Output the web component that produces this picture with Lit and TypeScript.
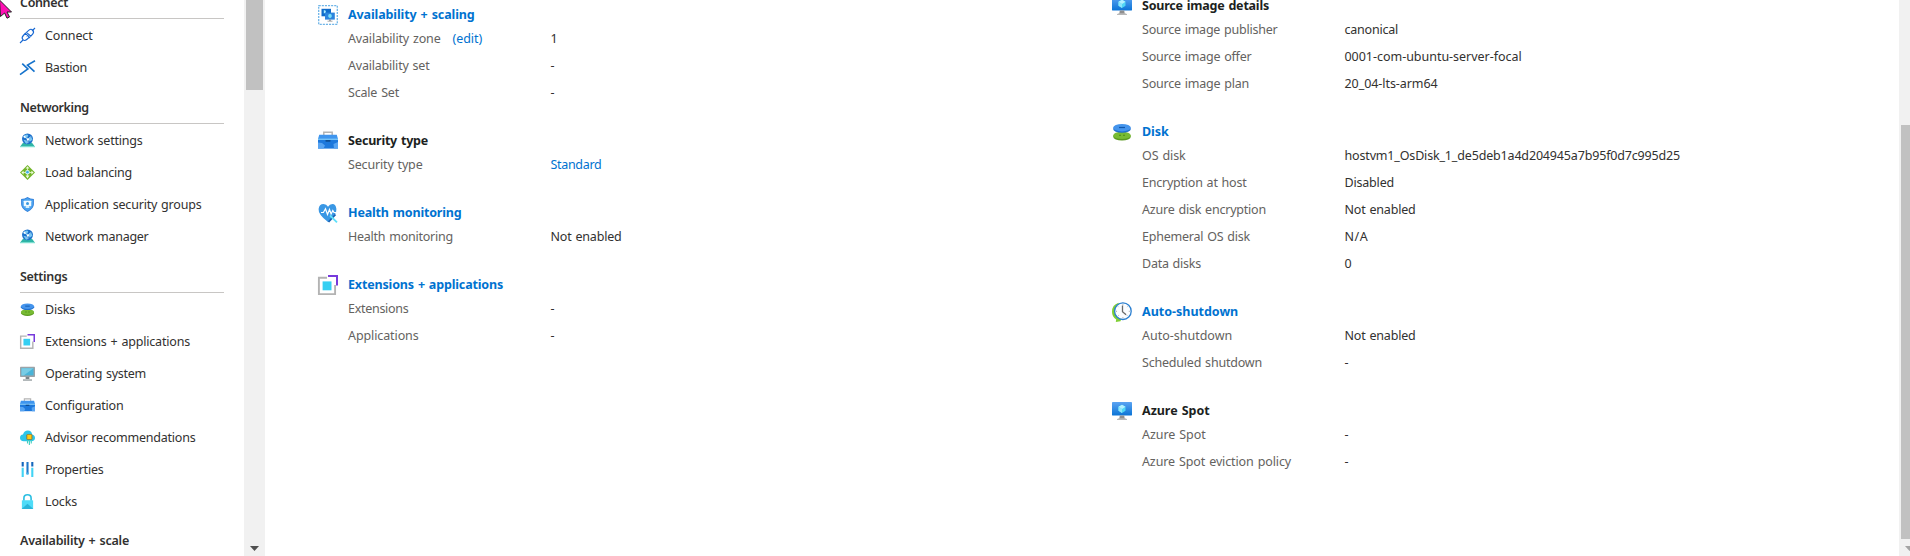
import { LitElement, html, css, svg } from "lit";
import { customElement, property } from "lit/decorators.js";

const FAMILY = '"Noto Sans", "Open Sans", sans-serif';
const WORD_GAP = 0.9;
const ctx = document.createElement("canvas").getContext("2d")!;

/* Tracking that brings a label to its designed width. */
function tracking(text: string, width: number, weight: number): number {
  ctx.font = `${weight} 12.5px ${FAMILY}`;
  const spaces = text.split(" ").length - 1;
  return (width - spaces * WORD_GAP - ctx.measureText(text).width) / Math.max(1, text.length - 1);
}

@customElement("ui-label")
export class UiLabel extends LitElement {
  static styles = css`
    :host { display: inline-block; white-space: pre; word-spacing: 0.9px; }
  `;
  @property() text = "";
  @property({ type: Number }) width = 0;
  @property({ type: Number }) weight = 400;
  render() {
    const ls = this.text.length > 1 ? tracking(this.text, this.width - 0.8, this.weight) : 0;
    return html`<span style="letter-spacing:${ls.toFixed(3)}px">${this.text}</span>`;
  }
}

const monitor = svg`
  <rect x="0" y="1" width="20" height="13.4" rx=".4" fill="url(#mon)"/>
  <path d="M7.800 14.400h4.400l.6 3.600H7.200z" fill="#8f8f8f"/><path d="M5 18.200q1-.8 2.400-.9h5.200q1.400.1 2.400.9v.8H5z" fill="#b8b8b8"/>
  <path d="M10 3.800l3.500 2v4L10 12 6.500 9.800v-4z" fill="#50d6f5"/><path d="M10 3.800l3.500 2L10 7.900 6.500 5.800z" fill="#b4f1ff"/><path d="M10 7.900v4.100L6.500 9.800v-4z" fill="#8be6fb"/>`;

const globe = svg`
  <path d="M4 13h12l4 5.300H0z" fill="#2fb5a6"/><path d="M0 17.500h20V19H0z" fill="#7fe0d2"/>
  <circle cx="10" cy="7.800" r="7.300" fill="#1a6fcb"/>
  <path d="M4.500 4.500q3-3.500 6.500-2l-1 3.500-3.500 1zM11 8l4-3 1.500 4-3.500 2.500zM4.500 9l4.500 1 1 3.500-2 .8z" fill="#79c6f2"/>
  <path d="M6 5l4.500 3.500 4-4M10.500 8.500v5" stroke="#d7f3ff" stroke-width="1" fill="none"/>
  <circle cx="6" cy="5" r="1.300" fill="#fff"/><circle cx="10.500" cy="8.500" r="1.500" fill="#fff"/>`;

const icons: Record<string, unknown> = {
  connect: svg`<g fill="none" stroke="#1868d2" stroke-width="1.500">
    <path d="M0 20l4-4M16 4l4-4"/>
    <path d="M7.200 7 4.500 10q-3 3.200-.6 5.600t5.500-.6l3-2.700zM6.600 6.600l6.600 6.400"/>
    <path d="M8.600 5.800 12 2.800q2.800-2.300 5 0t.1 5.200l-2.700 3z"/><path d="M9 11.500l2.500-2.500M12.500 13.500l1-2" stroke-width="1"/></g>`,
  bastion: svg`<g fill="none" stroke="#1673cc" stroke-width="2.200"><path d="M3 4.800 10.500 12 0 19.500"/><path d="M20 1 10 6.800 19.300 15.500"/></g>`,
  globe,
  balance: svg`<path d="M10 0 20 10 10 20 0 10z" fill="#72b529"/><circle cx="10" cy="9.500" r="3" fill="#e3f7ff"/><circle cx="10" cy="9.500" r="1.800" fill="#41aee6"/>
    <path d="M10 1.500 12.500 4.500h-5zM1.800 10l3-2.500v5zM18.200 10l-3-2.500v5zM7.500 14h5L10 18z" fill="#f3fae6"/><path d="M10 4v3M10 12v3M4 10h3M13 10h3" stroke="#dff3bd" stroke-width="1.200"/>`,
  shield: svg`<path d="M10 0q3.500 2.400 8.500 2.600v7q0 6-8.500 10.400-8.500-4.400-8.500-10.400v-7Q6.500 2.400 10 0z" fill="#2f7fda"/><path d="M10 1.300q3 2 7.300 2.300v6q0 5.200-7.300 9-7.300-3.800-7.300-9v-6Q7 3.300 10 1.300z" fill="#4ba3f0"/>
    <rect x="5" y="5" width="10" height="7.200" rx=".6" fill="#f1faff"/><path d="M8 12h4l.6 2.500H7.400z" fill="#d4effd"/><circle cx="10" cy="8.500" r="2" fill="#3999e2"/>`,
  disks: svg`<ellipse cx="10" cy="14.700" rx="8.800" ry="3.900" fill="#5b9a20"/><ellipse cx="10" cy="13.400" rx="8.800" ry="3.700" fill="#78bb33"/>
    <path d="M7 13.300h2M11 13.300h2" stroke="#4a8a18" stroke-width="1.100"/><ellipse cx="10" cy="7" rx="8.800" ry="3.800" fill="#1f6fd0"/><ellipse cx="10" cy="5.700" rx="8.800" ry="3.700" fill="#4494ec"/><path d="M7 5.500h6" stroke="#0f57ac" stroke-width="1.200"/>`,
  extensions: svg`<path d="M9 2.800H.9v16.300h16.200V10" fill="none" stroke="#b3b3b3" stroke-width="1.900"/><rect x="4.600" y="6.400" width="8.900" height="8.900" fill="#35cff2"/><path d="M10 1h9v9.500" fill="none" stroke="#773adc" stroke-width="2"/>`,
  os: svg`<rect y="1" width="20" height="13.500" rx="1" fill="#9ba3a8"/><rect x="2" y="3" width="16" height="9.500" fill="#49b4d8"/><path d="M2 3h16L5 12.500H2z" fill="#79cce5"/><path d="M7.500 14.500h5v3h-5z" fill="#7c8589"/><path d="M4 17.500h12V20H4z" fill="#b2b8ba"/>`,
  toolbox: svg`<path d="M5.800 4V1.200h8.400V4" fill="none" stroke="#b4b4b4" stroke-width="1.500"/><path d="M1.200 3.800h17.600L20 8H0z" fill="#3f95ee"/><path d="M0 8.500h20V17.600H0z" fill="#1d78dc"/><path d="M0 7.600h20v1.300H0z" fill="#75c4f8"/><path d="M0 11.500l4 .5 3 2.500-1.500 3.100H0zM20 11l-4.500 2 .5 4.600h4z" fill="#58a4f2"/><rect x="7.500" y="8.900" width="5" height="1.800" rx=".4" fill="#0c4d94"/>`,
  advisor: svg`<path d="M5 15Q0 14.500 0 10.500T4 6Q5.500.8 10.500.8 15.500 1 16.200 6q3.800.8 3.800 4.600T15 15z" fill="#2cc5e9"/><path d="M10 13v5M12.500 13v7M15 13v5" stroke="#40cfc0" stroke-width="1.500"/><rect x="8.500" y="5.500" width="8" height="7.500" rx="1.500" fill="#9c7422"/><rect x="9.700" y="6.500" width="5.600" height="5.500" fill="#ffca12"/>`,
  properties: svg`<path d="M3.600 0v6M16.400 0v6" stroke="#1567bd" stroke-width="2.800"/><path d="M3.600 7.500V20M16.400 7.500V20" stroke="#42d4f5" stroke-width="2.800"/><path d="M10 0v16" stroke="#1f78cb" stroke-width="2.800"/><path d="M10 14v3" stroke="#42b4ee" stroke-width="2.800"/>`,
  lock: svg`<path d="M5.200 9V5.500Q5.200 1 10 1t4.800 4.500V9" fill="none" stroke="#2dbfe2" stroke-width="2.200"/><rect x="2.500" y="8.300" width="15" height="11.700" rx=".8" fill="#4fdcf8"/><path d="M2.500 19.500 10 13l7.500 6.500v.5h-15z" fill="#2ab5da"/>`,
  scaling: svg`<rect x=".7" y=".7" width="18.600" height="18.600" fill="none" stroke="#6fb5e8" stroke-width="1.300" stroke-dasharray="2.100 1"/><rect x="3.500" y="3.800" width="9.500" height="7.500" fill="#0f6cca"/><path d="M5.800 5l2 .8v2l-2 .7z" fill="#a8ecff"/><rect x="7" y="7.600" width="9.800" height="7" fill="#2b84dd"/><path d="M11.200 14.600h1.600v1.500h-1.600z" fill="#8a8a8a"/><path d="M9.500 16.200h5" stroke="#aaa"/><path d="M12 8.800l1.700 1v2.200L12 13.200l-1.700-1.200V9.800z" fill="#79e0fa"/>`,
  health: svg`<path d="M10 19Q0 11.500.6 6 1.200 1 5.500 1 8.500 1 10 3.800 11.500 1 14.500 1q3.300 0 3.900 5 .6 5.500-8.400 13z" fill="#3a97e4"/><path d="M3 9.500h2.400L7.500 5.800 9.500 11.500l2-5 1.600 4.500 1.700-3.500 1.200 2h2" fill="none" stroke="#fff" stroke-width="1.200"/><path d="M10.500 19 17.500 11.500" stroke="#165fb3" stroke-width="1.800"/><path d="M12 12.500 19 19.300" stroke="#5fe0fa" stroke-width="1.800"/>`,
  clock: svg`<path d="M6.500.8Q0 3 0 9.800 0 15 4.200 17.500l-.4 2.500 4.700-.8 1-3z" fill="#80cf35"/><circle cx="10.900" cy="9.200" r="8.300" fill="#fbfdff" stroke="#2b7fd0" stroke-width="1.300"/><path d="M10.500 3.500v6.200l3.600 3" fill="none" stroke="#6a6a6a" stroke-width="1.300"/><path d="M10.900 2.300v1M10.900 15.200v1M4 9.300h1M16.800 9.300h1M6 4.500l.6.600M15.600 4.500l-.6.600M6 14l.6-.6M15.600 14l-.6-.6" stroke="#999" stroke-width=".9"/>`,
  monitor,
};

@customElement("ui-icon")
export class UiIcon extends LitElement {
  static styles = css`
    :host { display: block; flex: none; }
    svg { display: block; width: 100%; height: 100%; overflow: visible; }
  `;
  @property() name = "";
  render() {
    return html`<svg viewBox="0 0 20 20" aria-hidden="true">
      <defs><linearGradient id="mon" x1="0" y1="0" x2="0" y2="1"><stop offset="0" stop-color="#5ba3f2"/><stop offset="1" stop-color="#0b74d6"/></linearGradient></defs>
      ${icons[this.name]}</svg>`;
  }
}

type Text = [string, number];
interface NavGroup { title: Text; items: [string, string, number][]; }
interface Row { label: Text; value: Text; edit?: boolean; link?: boolean; }
interface Section { icon: string; title: Text; link?: boolean; rows: Row[]; }

const nav: NavGroup[] = [
  { title: ["Connect", 49], items: [["connect", "Connect", 48.5], ["bastion", "Bastion", 43]] },
  { title: ["Networking", 70], items: [
    ["globe", "Network settings", 98.5], ["balance", "Load balancing", 88],
    ["shield", "Application security groups", 157.5], ["globe", "Network manager", 104.5]] },
  { title: ["Settings", 48.5], items: [
    ["disks", "Disks", 31], ["extensions", "Extensions + applications", 146], ["os", "Operating system", 102],
    ["toolbox", "Configuration", 79.5], ["advisor", "Advisor recommendations", 151.5],
    ["properties", "Properties", 59.5], ["lock", "Locks", 33]] },
  { title: ["Availability + scale", 110], items: [] },
];

const left: Section[] = [
  { icon: "scaling", title: ["Availability + scaling", 127.5], link: true, rows: [
    { label: ["Availability zone", 93.5], value: ["1", 6], edit: true },
    { label: ["Availability set", 82.5], value: ["-", 5] },
    { label: ["Scale Set", 52], value: ["-", 5] }] },
  { icon: "toolbox", title: ["Security type", 81], rows: [
    { label: ["Security type", 75.500], value: ["Standard", 52], link: true }] },
  { icon: "health", title: ["Health monitoring", 114.5], link: true, rows: [
    { label: ["Health monitoring", 106], value: ["Not enabled", 72] }] },
  { icon: "extensions", title: ["Extensions + applications", 156], link: true, rows: [
    { label: ["Extensions", 61.5], value: ["-", 5] },
    { label: ["Applications", 71.5], value: ["-", 5] }] },
];

const right: Section[] = [
  { icon: "monitor", title: ["Source image details", 128], rows: [
    { label: ["Source image publisher", 136.5], value: ["canonical", 54.5] },
    { label: ["Source image offer", 110.5], value: ["0001-com-ubuntu-server-focal", 178] },
    { label: ["Source image plan", 108], value: ["20_04-lts-arm64", 94] }] },
  { icon: "disks", title: ["Disk", 27.5], link: true, rows: [
    { label: ["OS disk", 44.5], value: ["hostvm1_OsDisk_1_de5deb1a4d204945a7b95f0d7c995d25", 336.5] },
    { label: ["Encryption at host", 105.5], value: ["Disabled", 50.5] },
    { label: ["Azure disk encryption", 125], value: ["Not enabled", 72] },
    { label: ["Ephemeral OS disk", 109], value: ["N/A", 24] },
    { label: ["Data disks", 60], value: ["0", 7] }] },
  { icon: "clock", title: ["Auto-shutdown", 97], link: true, rows: [
    { label: ["Auto-shutdown", 91], value: ["Not enabled", 72] },
    { label: ["Scheduled shutdown", 121], value: ["-", 5] }] },
  { icon: "monitor", title: ["Azure Spot", 68.5], rows: [
    { label: ["Azure Spot", 64.5], value: ["-", 5] },
    { label: ["Azure Spot eviction policy", 150], value: ["-", 5] }] },
];

const label = (t: Text, weight = 400) =>
  html`<ui-label .text=${t[0]} .width=${t[1]} .weight=${weight}></ui-label>`;

@customElement("app-root")
export class AppRoot extends LitElement {
  static styles = css`
    :host { display: block; height: 556px; overflow: hidden; background: #fff; position: relative;
      font: 12.5px/20px "Noto Sans", "Open Sans", sans-serif; color: #323130; }
    * { box-sizing: border-box; }
    .page { display: grid; grid-template-columns: 244px 21px 53px 794px 787px 11px; grid-template-rows: 556px; height: 556px; overflow: hidden; }
    .menu { margin-top: -21px; padding: 0 20px; }
    .head { height: 40px; padding-top: 14px; margin-bottom: 1px; border-bottom: 1px solid #c8c6c4; font-weight: 600; }
    .head.last { border: 0; padding-top: 13px; }
    .item { display: flex; align-items: center; height: 32px; gap: 10px; }
    .item ui-icon { width: 15px; height: 15px; margin-top: -2px; }
    .track { background: #f1f1f1; display: flex; flex-direction: column; justify-content: space-between; align-items: center; overflow: hidden; }
    .thumb { background: #c1c1c1; width: 17px; height: 90px; }
    .arrow { width: 9px; height: 5px; background: #505050; clip-path: polygon(0 0, 100% 0, 50% 100%); margin-bottom: 5px; }
    .outer { align-items: flex-start; padding: 125px 0 0 2px; justify-content: flex-start; }
    .outer .thumb { height: 414px; flex: none; }
    .outer .arrow { background: #a3a3a3; margin: 7px 0 0 4px; flex: none; }
    .col { grid-column: 4; padding-top: 2.5px; }
    .col.right { grid-column: 5; margin-top: -6.5px; padding-top: 0; }
    .section { padding-bottom: 21px; }
    .title { display: flex; align-items: center; height: 24px; gap: 10px; font-weight: 700; color: #201f1e; }
    .title ui-icon { width: 20px; height: 20px; }
    .row { display: grid; grid-template-columns: 202.5px 1fr; align-items: center; height: 27px; padding: 0 0 2px 30px; }
    .name { color: #646260; display: flex; gap: 12px; }
    .blue { color: #0072d0; }
    .cursor { position: absolute; left: -5px; top: -2px; width: 18px; height: 21px; }
  `;

  section(s: Section) {
    return html`<section class="section">
      <div class="title ${s.link ? "blue" : ""}"><ui-icon name=${s.icon}></ui-icon>${label(s.title, 700)}</div>
      ${s.rows.map((r) => html`<div class="row">
        <div class="name">${label(r.label)}${r.edit ? html`<span class="blue">${label(["(edit)", 30.5])}</span>` : ""}</div>
        <div class=${r.link ? "blue" : ""}>${label(r.value)}</div>
      </div>`)}
    </section>`;
  }

  render() {
    return html`<div class="page">
      <nav class="menu">
        ${nav.map((g) => html`<div class="head ${g.items.length ? "" : "last"}">${label(g.title, 600)}</div>
          ${g.items.map(([icon, text, w]) => html`<div class="item"><ui-icon name=${icon}></ui-icon>${label([text, w])}</div>`)}`)}
      </nav>
      <div class="track"><div class="thumb"></div><div class="arrow"></div></div>
      <div class="col">${left.map((s) => this.section(s))}</div>
      <div class="col right">${right.map((s) => this.section(s))}</div>
      <div class="track outer"><div class="thumb"></div><div class="arrow"></div></div>
    </div>
    <svg class="cursor" viewBox="0 0 18 21"><path d="M4.500 2 16.500 14H12l2.500 5-2.500 1.200L9.600 15 5.500 18.500z" fill="#ff10b4" stroke="#222" stroke-width="1"/></svg>`;
  }
}
